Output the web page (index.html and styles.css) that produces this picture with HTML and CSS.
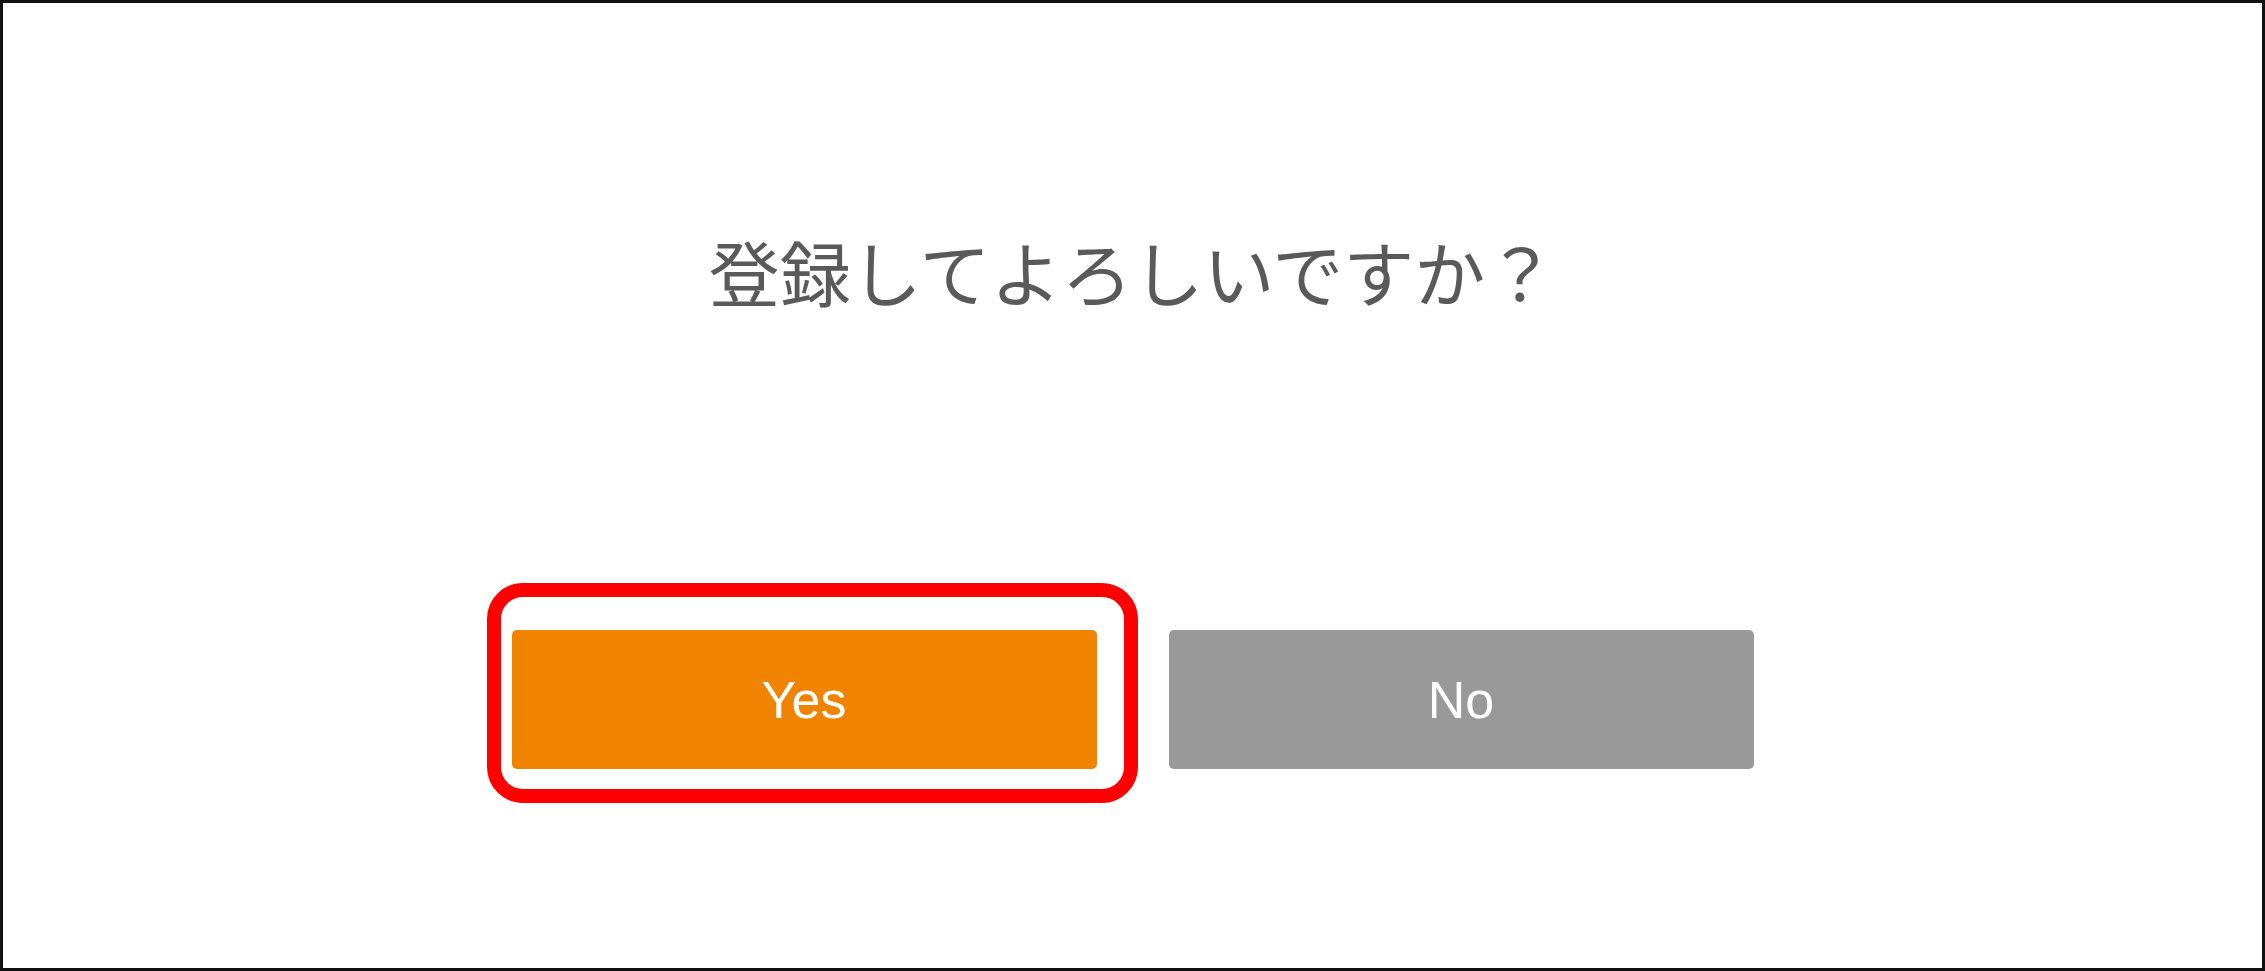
FILE: index.html
```html
<!DOCTYPE html>
<html lang="ja">
<head>
    <meta charset="UTF-8">
    <meta name="viewport" content="width=device-width, initial-scale=1.0">
    <title>登録確認</title>
    <link rel="stylesheet" href="styles.css">
</head>
<body>
    <div class="frame">
        <p class="message">登録してよろしいですか？</p>

        <div class="actions">
            <div class="yes-wrap">
                <button type="button" class="btn btn-yes">Yes</button>
                <!-- annotation highlight -->
                <span class="highlight"></span>
            </div>
            <button type="button" class="btn btn-no">No</button>
        </div>
    </div>
</body>
</html>
```

FILE: styles.css
```css
html,
body {
    margin: 0;
    padding: 0;
    background-color: #fff;
}

.frame {
    box-sizing: border-box;
    width: 2265px;
    height: 971px;
    border: 3px solid #111;
    padding-top: 232px;
    display: flex;
    flex-direction: column;
    align-items: center;
}

.message {
    margin: 0;
    font-family: "Noto Sans CJK JP", "Liberation Sans", sans-serif;
    font-weight: 400;
    font-size: 71px;
    line-height: 1;
    color: #5a5a5a;
    text-align: center;
}

.actions {
    margin-top: 324px;
    display: flex;
    gap: 72px;
}

.yes-wrap {
    position: relative;
}

.btn {
    width: 585px;
    height: 139px;
    border: none;
    border-radius: 5px;
    color: #fff;
    font-family: "Liberation Sans", Arial, sans-serif;
    font-size: 52px;
    padding-top: 2px;
    cursor: pointer;
    display: block;
}

.btn-yes {
    background-color: #f08300;
}

.btn-no {
    background-color: #999999;
}

.highlight {
    position: absolute;
    left: -25px;
    top: -47px;
    width: 651px;
    height: 220px;
    box-sizing: border-box;
    border: 14px solid #ff0000;
    border-radius: 36px;
    pointer-events: none;
}
```
